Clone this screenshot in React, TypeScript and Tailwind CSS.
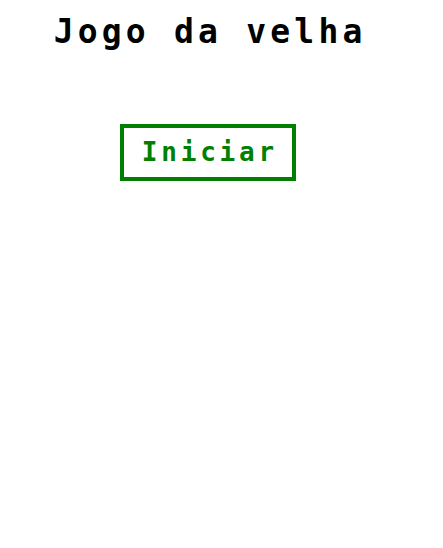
export default function App() {
  return (
    <div className="min-h-screen bg-white">
      <div className="w-[416px] flex flex-col items-center font-['DejaVu_Sans_Mono',monospace]">
        <h1 className="mt-[13px] text-[33px] leading-[38px] font-bold tracking-[4.2px] pl-[4.2px] text-black">
          Jogo da velha
        </h1>
        <button className="mt-[73px] w-[176px] h-[57px] border-4 border-[#008000] text-[#008000] text-[26px] font-bold tracking-[3.8px] pl-[3.8px] flex items-center justify-center">
          Iniciar
        </button>
      </div>
    </div>
  );
}
